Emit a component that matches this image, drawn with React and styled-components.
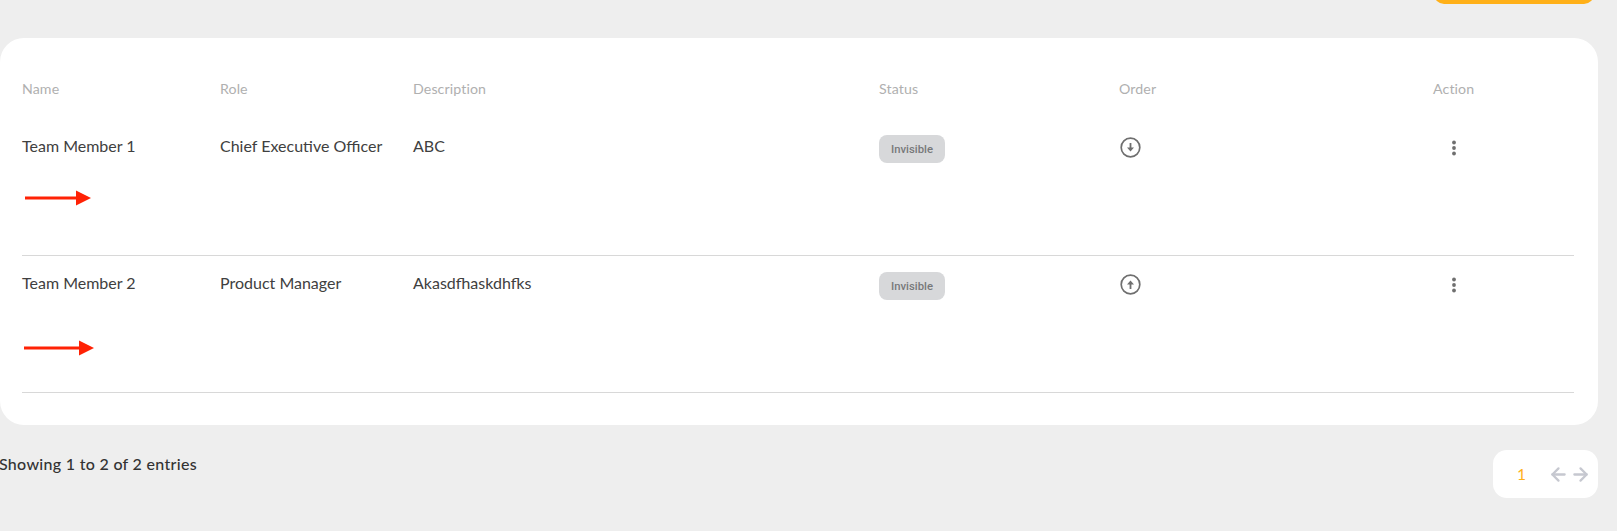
import styled, { createGlobalStyle } from "styled-components";
import { ArrowLeft, ArrowRight } from "lucide-react";

const GlobalStyle = createGlobalStyle`
  html, body {
    margin: 0;
    padding: 0;
    background: #eeeeee;
    overflow: hidden;
  }
  body {
    font-family: "Lato", "Noto Sans", sans-serif;
  }
`;

const Page = styled.div`
  width: 1617px;
  height: 531px;
  padding-right: 19px;
  box-sizing: border-box;
`;

const Toolbar = styled.div`
  height: 4px;
  overflow: hidden;
  display: flex;
  justify-content: flex-end;
  align-items: flex-end;
  padding-right: 4px;
  margin-bottom: 34px;
`;

const AddButton = styled.div`
  flex: none;
  width: 160px;
  height: 40px;
  background: #ffb018;
  border-radius: 10px;
`;

const Card = styled.div`
  background: #fff;
  border-radius: 24px;
  padding: 0 24px 32px 22px;
  height: 387px;
  box-sizing: border-box;
`;

const Row = styled.div`
  display: grid;
  grid-template-columns: 198px 193px 466px 240px 314px 1fr;
  height: ${(p) => p.$height}px;
  box-sizing: border-box;
  border-bottom: ${(p) => (p.$line ? "1px solid #d8d8d8" : "none")};
`;

const HeadCell = styled.div`
  padding-top: 42px;
  font-size: 14.2px;
  letter-spacing: 0.1px;
  line-height: 18px;
  color: #b0b0b0;
`;

const Cell = styled.div`
  padding-top: ${(p) => p.$top}px;
  font-size: 16px;
  line-height: 20px;
  color: #404040;
`;

const Arrow = styled.svg`
  display: block;
  margin-top: ${(p) => p.$gap}px;
  margin-left: ${(p) => p.$indent}px;
`;

const Badge = styled.div`
  display: flex;
  align-items: center;
  justify-content: center;
  width: 66px;
  height: 28px;
  box-sizing: border-box;
  padding-top: 1px;
  margin-top: -1px;
  border-radius: 8px;
  background: #d7d8da;
  color: #77787a;
  font-family: "Roboto", sans-serif;
  font-size: 11.3px;
  font-weight: 500;
`;

const IconSlot = styled.div`
  display: flex;
  margin: ${(p) => p.$margin};
`;

const Footer = styled.div`
  display: flex;
  justify-content: space-between;
  align-items: flex-start;
  margin-top: 25px;
`;

const Entries = styled.div`
  margin: 4px 0 0 -1px;
  font-size: 16px;
  font-weight: 500;
  letter-spacing: 0.3px;
  line-height: 20px;
  color: #333;
`;

const Pager = styled.div`
  display: flex;
  align-items: center;
  width: 105px;
  height: 48px;
  box-sizing: border-box;
  padding-left: 24px;
  border-radius: 14px;
  background: #fff;
`;

const PageNumber = styled.span`
  width: 31px;
  font-size: 15.5px;
  color: #ffb018;
`;

const PagerArrows = styled.div`
  display: flex;
  gap: 1px;
  color: #c6c8d0;
`;

const members = [
  { name: "Team Member 1", role: "Chief Executive Officer", description: "ABC", up: false, top: 38, arrow: { width: 66, gap: 34, indent: 3 } },
  { name: "Team Member 2", role: "Product Manager", description: "Akasdfhaskdhfks", up: true, top: 17, arrow: { width: 70, gap: 47, indent: 2 } },
];

function RedArrow({ width, gap, indent }) {
  return (
    <Arrow width={width} height="16" viewBox={`0 0 ${width} 16`} $gap={gap} $indent={indent}>
      <rect x="0" y="6.5" width={width - 14} height="3" fill="#ff2205" />
      <polygon points={`${width - 15},0.5 ${width},8 ${width - 15},15.5`} fill="#ff2205" />
    </Arrow>
  );
}

function OrderIcon({ up }) {
  return (
    <svg width="21" height="21" viewBox="0 0 21 21" fill="none">
      <circle cx="10.5" cy="10.5" r="9.3" stroke="#6f6f6f" strokeWidth="1.7" />
      {up ? (
        <>
          <path d="M10.5 15V9.5" stroke="#6f6f6f" strokeWidth="1.8" />
          <path d="M10.5 6.5 14 10.5H7z" fill="#6f6f6f" />
        </>
      ) : (
        <>
          <path d="M10.5 6v5.5" stroke="#6f6f6f" strokeWidth="1.8" />
          <path d="M10.5 14.5 14 10.5H7z" fill="#6f6f6f" />
        </>
      )}
    </svg>
  );
}

function DotsIcon() {
  return (
    <svg width="6" height="18" viewBox="0 0 6 18" fill="#6f6f6f">
      <circle cx="3" cy="3.5" r="1.9" />
      <circle cx="3" cy="9" r="1.9" />
      <circle cx="3" cy="14.5" r="1.9" />
    </svg>
  );
}

export default function App() {
  return (
    <Page>
      <GlobalStyle />
      <Toolbar>
        <AddButton />
      </Toolbar>
      <Card>
        <Row $height={60}>
          {["Name", "Role", "Description", "Status", "Order", "Action"].map((title) => (
            <HeadCell key={title}>{title}</HeadCell>
          ))}
        </Row>
        {members.map((m, i) => (
          <Row key={m.name} $height={i === 0 ? 158 : 137} $line>
            <Cell $top={m.top}>
              {m.name}
              <RedArrow {...m.arrow} />
            </Cell>
            <Cell $top={m.top}>{m.role}</Cell>
            <Cell $top={m.top}>{m.description}</Cell>
            <Cell $top={m.top}>
              <Badge>Invisible</Badge>
            </Cell>
            <Cell $top={m.top}>
              <IconSlot $margin="1px 0 0 1px">
                <OrderIcon up={m.up} />
              </IconSlot>
            </Cell>
            <Cell $top={m.top}>
              <IconSlot $margin="3px 0 0 18px">
                <DotsIcon />
              </IconSlot>
            </Cell>
          </Row>
        ))}
      </Card>
      <Footer>
        <Entries>Showing 1 to 2 of 2 entries</Entries>
        <Pager>
          <PageNumber>1</PageNumber>
          <PagerArrows>
            <ArrowLeft size={21} strokeWidth={2.6} />
            <ArrowRight size={21} strokeWidth={2.6} />
          </PagerArrows>
        </Pager>
      </Footer>
    </Page>
  );
}
